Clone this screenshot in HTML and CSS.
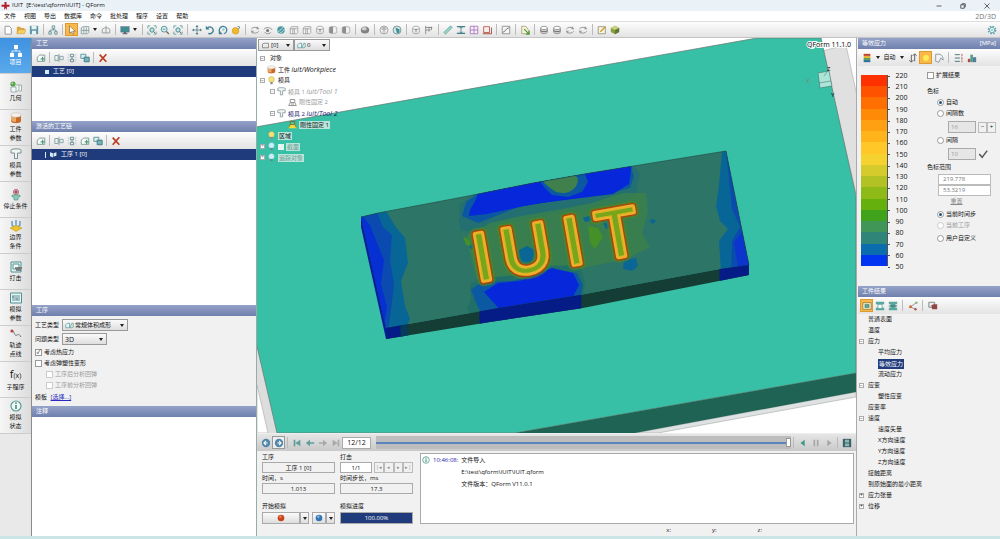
FILE: index.html
```
<!DOCTYPE html>
<html lang="zh-CN">
<head>
    <meta charset="UTF-8">
    <meta name="viewport" content="width=device-width, initial-scale=1.0">
    <title>IUIT [E:\test\qform\IUIT] - QForm</title>
    <link rel="stylesheet" href="styles.css">
</head>
<body>
    <!-- Icon sprite -->
    <svg class="sprite" aria-hidden="true">
        <symbol id="i-new" viewBox="0 0 12 12"><path d="M2.500 1.500h5l2.500 2.500v7h-7.500z" fill="#fff" stroke="#888"/></symbol>
        <symbol id="i-open" viewBox="0 0 12 12"><path d="M1 10V2h4l1 1.500h4V10z" fill="#d9a63a"/><path d="M1 10.500l2-5h9l-2 5z" fill="#f5cf62" stroke="#b98a2a" stroke-width=".5"/></symbol>
        <symbol id="i-save" viewBox="0 0 12 12"><path d="M1 1h10v10H1z" fill="#5f97a5"/><path d="M3 1h6v4H3zM3.500 7h5v4h-5z" fill="#e8f2f4"/></symbol>
        <symbol id="i-flow" viewBox="0 0 12 12"><path d="M5 1h3v3H5zM1 8h3v3H1zM8 8h3v3H8zM6.500 4v2M2.500 8V6h7v2" fill="none" stroke="#5b8f8f"/></symbol>
        <symbol id="i-cursor" viewBox="0 0 12 12"><path d="M3 1v9l2.300-2 1.500 3.300 1.500-.7-1.500-3.100H10z" fill="#fff" stroke="#7a6742" stroke-width=".8"/></symbol>
        <symbol id="i-mesh" viewBox="0 0 12 12"><path d="M1.500 3.500l2-1.500h7v7l-1.500 1.500h-7.500zM1.500 6.500h9M4.500 3v7M7.500 3v7" fill="#eef3f3" stroke="#7b8f90" stroke-width=".9"/></symbol>
        <symbol id="i-plane" viewBox="0 0 12 12"><path d="M1.500 5v4.500h9V5L8 3.500H4zM6 1v9" fill="none" stroke="#8b9799"/></symbol>
        <symbol id="i-screen" viewBox="0 0 12 12"><rect x="1" y="2" width="10" height="6.500" fill="#3f8f92" stroke="#557" stroke-width=".5"/><path d="M4.500 8.500h3V10h-3zM3 10h6v1H3z" fill="#667"/></symbol>
        <symbol id="i-zoom" viewBox="0 0 12 12"><circle cx="5" cy="5" r="3.500" fill="#dff0f0" stroke="#3f8a8c"/><path d="M7.700 7.700l3 3" stroke="#7a6a5a" stroke-width="1.600"/><path d="M3.500 5h3" stroke="#3f8a8c"/></symbol>
        <symbol id="i-zoomfit" viewBox="0 0 12 12"><path d="M1 4V1h3M8 1h3v3M1 8v3h3M11 8v3H8" fill="none" stroke="#5a9a9a"/><circle cx="6" cy="6" r="2.600" fill="#bfe2e0" stroke="#35807f"/><path d="M8 8l2 2" stroke="#555"/></symbol>
        <symbol id="i-move" viewBox="0 0 12 12"><path d="M6 1v10M1 6h10" stroke="#4d7f88"/><path d="M6 0l1.800 2.300H4.200zM6 12l1.800-2.300H4.200zM0 6l2.300-1.800v3.600zM12 6L9.700 4.200v3.600z" fill="#4d7f88"/></symbol>
        <symbol id="i-rot" viewBox="0 0 12 12"><path d="M3 3.500a4 4 0 1 1 1 6.500" fill="none" stroke="#3a7f92" stroke-width="1.600"/><path d="M1 1v4.500h4.500z" fill="#3a7f92"/></symbol>
        <symbol id="i-rot3" viewBox="0 0 12 12"><path d="M2 8a4.500 4.500 0 1 1 5 2.500" fill="none" stroke="#3a7f92" stroke-width="1.500"/><path d="M1 6v5h4.500z" fill="#3a7f92"/><circle cx="6.500" cy="5.500" r="1.500" fill="#8cc"/></symbol>
        <symbol id="i-spin" viewBox="0 0 12 12"><circle cx="5.500" cy="7" r="4" fill="#f0b92c" stroke="#c48b16" stroke-width=".6"/><path d="M8 1.500l2.500 1-1.500 2.500" fill="none" stroke="#4d7f88"/></symbol>
        <symbol id="i-orbit" viewBox="0 0 12 12"><path d="M1.500 5a5 3.500 0 0 1 9-.5M10.500 7.500a5 3.500 0 0 1-9 .5" fill="none" stroke="#999" stroke-width="1.200"/><path d="M9 1.500l2 3.500H7.500zM3 10.500L1 7h3.500z" fill="#999"/></symbol>
        <symbol id="i-eye" viewBox="0 0 12 12"><path d="M1 5a5.500 4 0 0 1 10 1M2 8.500a4 3 0 0 0 7.500 0" fill="none" stroke="#888"/><circle cx="5.500" cy="6.500" r="1.800" fill="#777"/></symbol>
        <symbol id="i-globe" viewBox="0 0 12 12"><circle cx="6" cy="6" r="4.500" fill="#4c98a0"/><path d="M2 8c3-1 5-3 7-6M4 10c3-1 5-3 6-5" stroke="#d4eeee" fill="none"/></symbol>
        <symbol id="i-box" viewBox="0 0 12 12"><path d="M1.500 3.500l2-1.500h7v7l-1.500 1.500h-7.500zM1.500 4.500h8M4.500 4.500v6M6.500 4.500v6" fill="#f2f2f2" stroke="#8b8b8b" stroke-width=".8"/></symbol>
        <symbol id="i-cyl" viewBox="0 0 12 12"><path d="M2 3.500v5c0 2.600 8 2.600 8 0v-5" fill="#ececec" stroke="#8b8b8b" stroke-width=".8"/><ellipse cx="6" cy="3.500" rx="4" ry="2" fill="#fff" stroke="#8b8b8b" stroke-width=".8"/><path d="M6 4v5" stroke="#777"/></symbol>
        <symbol id="i-ring" viewBox="0 0 12 12"><path d="M2 3.500v5c0 2.600 8 2.600 8 0v-5" fill="#d2d2d2" stroke="#777" stroke-width=".8"/><ellipse cx="6" cy="3.500" rx="4" ry="2" fill="#fff" stroke="#777" stroke-width=".8"/><path d="M2 6.500c0 2 8 2 8 0" stroke="#555" fill="none"/></symbol>
        <symbol id="i-half" viewBox="0 0 12 12"><path d="M1.500 3c2-1.500 7-1.500 9 0v6c-2 1.500-7 1.500-9 0z" fill="#f0f0f0" stroke="#999" stroke-width=".8"/><path d="M1.500 3C2.500 2 4 2 6 2v8c-2 0-3.500 0-4.500-1z" fill="#8e8e8e"/></symbol>
        <symbol id="i-ball" viewBox="0 0 12 12"><ellipse cx="6" cy="6" rx="5" ry="4.300" fill="#838383"/><ellipse cx="5" cy="4.500" rx="3" ry="2" fill="#cfcfcf"/></symbol>
        <symbol id="i-cube" viewBox="0 0 12 12"><circle cx="6" cy="6" r="4.800" fill="#ececec" stroke="#868686" stroke-width=".8"/><path d="M3 4.500l3 1.500 3-1.500M6 6v4M4 2.500l4 2M8 2.500l-4 2" stroke="#868686" fill="none" stroke-width=".8"/></symbol>
        <symbol id="i-cubet" viewBox="0 0 12 12"><circle cx="6" cy="6" r="4.800" fill="#d5e6e6" stroke="#517577" stroke-width=".8"/><path d="M4 3l5 2v4L6 10z" fill="#3e8f96"/></symbol>
        <symbol id="i-flag" viewBox="0 0 12 12"><path d="M2 1v10M2 3h8M2 6h6M6 2v6M9 2v4" stroke="#777" fill="none" stroke-width=".9"/></symbol>
        <symbol id="i-ruler" viewBox="0 0 12 12"><path d="M1 9l8-8 2 2-8 8z" fill="#9dd5ca" stroke="#4a9a90" stroke-width=".8"/></symbol>
        <symbol id="i-ibeam" viewBox="0 0 12 12"><path d="M1 2h10M1 10h10" stroke="#44808a" stroke-width="1.500"/><path d="M6 2v8M4 4l2-2 2 2M4 8l2 2 2-2" stroke="#44808a" fill="none"/></symbol>
        <symbol id="i-grid" viewBox="0 0 12 12"><path d="M1.500 1.500h9v9h-9zM6 1.500v9M1.500 6h9" fill="#f6effa" stroke="#a270b8"/></symbol>
        <symbol id="i-crop" viewBox="0 0 12 12"><path d="M2 2h7v7H2z" fill="none" stroke="#c04a3c"/><path d="M1 10.500h10.500V3" fill="none" stroke="#94372d"/></symbol>
        <symbol id="i-chart" viewBox="0 0 12 12"><path d="M1.500 1.500h9v9h-9z" fill="#f5f5f5" stroke="#888"/><path d="M2 9l3-2 1.500-2L10 3" fill="none" stroke="#666"/></symbol>
        <symbol id="i-pageg" viewBox="0 0 12 12"><path d="M2 1.500h5l3.500 5v4H2z" fill="#f4f1d8" stroke="#99905a" stroke-width=".8"/><path d="M5 5l6 6M11 7v4H7" stroke="#4f9a3c" stroke-width="1.500" fill="none"/></symbol>
        <symbol id="i-edit" viewBox="0 0 12 12"><path d="M1.500 2h8.500v8.500H1.500z" fill="#fbf6d8" stroke="#777" stroke-width=".8"/><path d="M4 8l6-6" stroke="#c99a28" stroke-width="1.600"/></symbol>
        <symbol id="i-cubeg" viewBox="0 0 12 12"><path d="M1 3.500L6 1l5 2.500v5L6 11 1 8.500z" fill="#8a9c3e"/><path d="M1 3.500L6 6l5-2.500L6 1z" fill="#cbd27e"/><path d="M6 6v5l5-2.500v-5z" fill="#5f7a34"/></symbol>
        <symbol id="i-gear" viewBox="0 0 12 12"><circle cx="6" cy="6" r="4.300" fill="none" stroke="#5aa3ad" stroke-width="1.800" stroke-dasharray="2 1.380"/><circle cx="6" cy="6" r="3.200" fill="#fff" stroke="#5aa3ad"/><circle cx="6" cy="6" r="1.200" fill="none" stroke="#5aa3ad" stroke-width=".8"/></symbol>
        <symbol id="i-add" viewBox="0 0 12 12"><path d="M1.500 10V5l3-2.500h6V10z" fill="#fafcfc" stroke="#72908d"/><path d="M8 4.500v5M5.500 7h5" stroke="#4d9f78" stroke-width="1.500"/></symbol>
        <symbol id="i-rename" viewBox="0 0 12 12"><path d="M1 3h4v6H1zM7 4h4v4H7zM6 1v10" fill="none" stroke="#7a9b9d"/></symbol>
        <symbol id="i-tree" viewBox="0 0 12 12"><path d="M1.500 1v10M10.500 1v10" stroke="#9bbcc0" stroke-dasharray="1 1"/><path d="M4 1.500h4v3H4zM4 7.500h4v3H4zM6 4.500v3" fill="none" stroke="#567f84"/></symbol>
        <symbol id="i-copy" viewBox="0 0 12 12"><path d="M1 1.500h6v5H1z" fill="#d9ecee" stroke="#4f8b96"/><path d="M5 5h6v5.500H5z" fill="#74b2bc" stroke="#34707c"/></symbol>
        <symbol id="i-del" viewBox="0 0 12 12"><path d="M2 2l8 8.500M10 1.500L2 10.500" stroke="#b93a20" stroke-width="2" fill="none"/></symbol>
        <symbol id="i-project" viewBox="0 0 12 12"><path d="M4 0h4v4H4zM0 8h4v4H0zM8 8h4v4H8z" fill="#fff"/><path d="M6 4v2M2 8V6h8v2" fill="none" stroke="#d8ecff"/></symbol>
        <symbol id="i-geom" viewBox="0 0 12 12"><path d="M1 6h5v5H1zM6 11l3-2V4H6M9 4h2.500v6H9" fill="#f5f8f8" stroke="#7d9a9a" stroke-width=".7"/><circle cx="3" cy="3" r="2.600" fill="#58a64b"/><circle cx="2.300" cy="2.300" r=".9" fill="#b5e0aa"/></symbol>
        <symbol id="i-work" viewBox="0 0 12 12"><path d="M1 3v6c0 3 10 3 10 0V3z" fill="#c86a2a"/><path d="M1 3v5c0 1 3 2 5 2V3z" fill="#e9a768"/><ellipse cx="6" cy="3" rx="5" ry="2.200" fill="#f6f1e8" stroke="#aaa" stroke-width=".4"/></symbol>
        <symbol id="i-tool" viewBox="0 0 12 12"><path d="M1 2c0-1.500 10-1.500 10 0v3H7.500v5.500h-3V5H1z" fill="#f1f4f4" stroke="#6d8587" stroke-width=".9"/></symbol>
        <symbol id="i-stop" viewBox="0 0 12 12"><circle cx="6" cy="3" r="2.500" fill="#d9a4ac" stroke="#9a4e5b" stroke-width=".8"/><circle cx="6" cy="3" r="1" fill="#8a2f40"/><path d="M2 6h8v2H8v3H4V8H2z" fill="#8cc9bb" stroke="#4d9384" stroke-width=".6"/></symbol>
        <symbol id="i-bound" viewBox="0 0 12 12"><path d="M2 1v4l2 2M6 0v6M10 1v4L8 7" stroke="#5b93b5" stroke-width="1.300" fill="none"/><path d="M0 8l6-2.500L12 8l-6 3.500z" fill="#ecc32f" stroke="#b89118" stroke-width=".5"/></symbol>
        <symbol id="i-blow" viewBox="0 0 12 12"><path d="M1 1h10v10H1z" fill="#e8f2f2" stroke="#4f9292"/><path d="M3 3h6v5H3z" fill="#fff" stroke="#4f9292"/><path d="M5 7h7M6 9h5" stroke="#666" stroke-width="1.400"/></symbol>
        <symbol id="i-sim" viewBox="0 0 12 12"><path d="M.5 1h11v10H.5z" fill="#e8f2f2" stroke="#4f9292"/><path d="M3 3v6M5 3v6M7 3v6M9 3v6" stroke="#3c7f80" stroke-width=".8"/><path d="M2.300 5h1.500M6.300 7h1.500" stroke="#3c7f80"/></symbol>
        <symbol id="i-trace" viewBox="0 0 12 12"><circle cx="2" cy="3" r="1.600" fill="#c03434"/><path d="M2 3c3 0 2 6 5 4 2-1 2-1 4 2" fill="none" stroke="#777"/></symbol>
        <symbol id="i-info" viewBox="0 0 12 12"><circle cx="6" cy="6" r="5" fill="#eef8f5" stroke="#5a9f93" stroke-width="1.200"/><path d="M6 5v4M6 2.500V4" stroke="#39756c" stroke-width="1.400"/></symbol>
        <symbol id="i-shape" viewBox="0 0 12 12"><path d="M1 9V5l2-2h3v6zM7 9l2-6h2v5l-2 1z" fill="#e8f4f4" stroke="#4b8f92" stroke-width=".9"/></symbol>
        <symbol id="i-doc" viewBox="0 0 12 12"><path d="M2 9V4l2-1h6v6z" fill="none" stroke="#777"/></symbol>
        <symbol id="i-bulb" viewBox="0 0 12 12"><circle cx="6" cy="4.500" r="3.800" fill="#f7e27a" stroke="#b9a04a" stroke-width=".6"/><path d="M4.500 8h3v3h-3z" fill="#888"/></symbol>
        <symbol id="i-bulbb" viewBox="0 0 12 12"><circle cx="6" cy="4.500" r="3.800" fill="#c8f1f6" stroke="#6fb3b8" stroke-width=".6"/><path d="M4.500 8h3v3h-3z" fill="#5d8a8a"/></symbol>
        <symbol id="i-fix" viewBox="0 0 12 12"><path d="M3 2h6v4H3zM1 10l2-4M11 10L9 6M1 10h10M4 8h4" fill="none" stroke="#8a8a8a" stroke-width="1.200"/></symbol>
        <symbol id="i-fixy" viewBox="0 0 12 12"><path d="M0 11l3-6h6l3 6z" fill="#f0dc3b"/><path d="M3 2h6v4H3zM1 10l2-4M11 10L9 6" fill="none" stroke="#776f2f" stroke-width="1.200"/></symbol>
        <symbol id="i-scale" viewBox="0 0 12 12"><path d="M2 1h8v2.500H2z" fill="#c4432e"/><path d="M2 3.500h8V6H2z" fill="#e3b437"/><path d="M2 6h8v2.500H2z" fill="#58a25a"/><path d="M2 8.500h8V11H2z" fill="#2f6f9c"/></symbol>
        <symbol id="i-updown" viewBox="0 0 12 12"><path d="M4 2v9M1.500 8.500L4 11l2.500-2.500M8 10V1M5.500 3.500L8 1l2.500 2.500" fill="none" stroke="#666" stroke-width="1.200"/></symbol>
        <symbol id="i-sun" viewBox="0 0 12 12"><circle cx="6" cy="6" r="3.500" fill="#ffec52"/></symbol>
        <symbol id="i-sheet" viewBox="0 0 12 12"><path d="M2 1.500h5c3 1 4 4 4 7L8 6l-2 5-4-1z" fill="#f4f4f4" stroke="#7d8f95"/></symbol>
        <symbol id="i-minmax" viewBox="0 0 12 12"><path d="M1 2h6M1 6h6M1 10h6" stroke="#4c7d7a" stroke-width="1.200"/><path d="M9.500 1v10" stroke="#a44" stroke-dasharray="3 1"/></symbol>
        <symbol id="i-histo" viewBox="0 0 12 12"><path d="M1 7h3v4H1z" fill="#b34a36"/><path d="M4 2h3v9H4z" fill="#4e9a86"/><path d="M7 5h4v6H7z" fill="#4f7f9a"/></symbol>
        <symbol id="i-res1" viewBox="0 0 12 12"><path d="M1 2h10v8H1z" fill="#fff3cf" stroke="#927a3d"/><path d="M3.500 4h5v4h-5z" fill="#5aa79a" stroke="#3f6d64" stroke-width=".6"/></symbol>
        <symbol id="i-res2" viewBox="0 0 12 12"><path d="M1 1h10v3H9v4h2v3H1V8h2V4H1z" fill="#5aa79f"/><path d="M4 4.500h4v4H4z" fill="#fff"/></symbol>
        <symbol id="i-res3" viewBox="0 0 12 12"><path d="M1 1h10v3H9v4h2v3H1V8h2V4H1z" fill="#5aa79f"/><path d="M1 6h10" stroke="#27665f"/></symbol>
        <symbol id="i-nodes" viewBox="0 0 12 12"><path d="M10 2L3 7l6 3" stroke="#888" fill="none"/><circle cx="10" cy="2" r="1.500" fill="#8b7"/><circle cx="3" cy="7" r="1.800" fill="#cc6a3a"/><circle cx="9" cy="10" r="1.500" fill="#b55"/></symbol>
        <symbol id="i-stack" viewBox="0 0 12 12"><path d="M1 1.500h7v6H1z" fill="#e5e8ec" stroke="#777"/><path d="M4 5l3-1h4v6H5z" fill="#8f4540"/></symbol>
        <symbol id="i-prev" viewBox="0 0 12 12"><circle cx="6" cy="6" r="5" fill="#4f86a9"/><path d="M8 6H4M6 3.500L3.500 6 6 8.500" stroke="#fff" stroke-width="1.300" fill="none"/></symbol>
        <symbol id="i-next" viewBox="0 0 12 12"><circle cx="6" cy="6" r="5" fill="#4f86a9"/><path d="M4 6h4M6 3.500L8.500 6 6 8.500" stroke="#fff" stroke-width="1.300" fill="none"/></symbol>
        <symbol id="i-first" viewBox="0 0 12 12"><path d="M2 2h2v8H2zM10 2v8L4 6z" fill="#5e9f9b"/></symbol>
        <symbol id="i-left" viewBox="0 0 12 12"><path d="M1 6l5-4v3h5v2H6v3z" fill="#5e9f9b"/></symbol>
        <symbol id="i-right" viewBox="0 0 12 12"><path d="M11 6L6 2v3H1v2h5v3z" fill="#a9a9a9"/></symbol>
        <symbol id="i-last" viewBox="0 0 12 12"><path d="M8 2h2v8H8zM2 2v8l6-4z" fill="#a9a9a9"/></symbol>
        <symbol id="i-playl" viewBox="0 0 12 12"><path d="M8 2v8L3 6z" fill="#3f9a85"/></symbol>
        <symbol id="i-pause" viewBox="0 0 12 12"><path d="M3 2h2v8H3zM7 2h2v8H7z" fill="#a6a6a6"/></symbol>
        <symbol id="i-playr" viewBox="0 0 12 12"><path d="M4 2v8l5-4z" fill="#a6a6a6"/></symbol>
        <symbol id="i-film" viewBox="0 0 12 12"><path d="M1 1h10v10H1z" fill="#3c5f66"/><path d="M3.500 2h5v3.500h-5zM3.500 6.500h5V10h-5z" fill="#8bb7b5"/></symbol>
        <symbol id="i-check" viewBox="0 0 12 12"><path d="M1.500 6l3.500 4 6-8" fill="none" stroke="#555" stroke-width="1.800"/></symbol>
        <symbol id="i-red" viewBox="0 0 12 12"><circle cx="6" cy="6" r="5" fill="#c9431f"/><circle cx="5" cy="4" r="2" fill="#e57c55"/></symbol>
        <symbol id="i-blue" viewBox="0 0 12 12"><circle cx="6" cy="6" r="5" fill="#3576b5"/><circle cx="5" cy="4" r="2" fill="#7cb1de"/></symbol>
    </svg>

    <!-- Title bar -->
    <header class="titlebar">
        <svg class="logo" viewBox="0 0 12 12"><path d="M4.500 0h3v4H12v3H8v5L6 9l-2 3V7H0V4h4.500z" fill="#b3202c"/></svg>
        <span>IUIT&nbsp; [E:\test\qform\IUIT] - QForm</span>
        <div class="window-buttons">
            <button aria-label="Minimize"><svg viewBox="0 0 12 12"><path d="M1 6h10" stroke="#333" stroke-width="1.500"/></svg></button>
            <button aria-label="Restore"><svg viewBox="0 0 12 12"><path d="M1.500 3.500h7v7h-7zM4 3V1.500h6.500V8H9" fill="none" stroke="#333" stroke-width="1.500"/></svg></button>
            <button aria-label="Close"><svg viewBox="0 0 12 12"><path d="M1 1l10 10M11 1L1 11" stroke="#333" stroke-width="1.500"/></svg></button>
        </div>
    </header>
    <nav class="menubar">
        <a href="#">文件</a><a href="#">视图</a><a href="#">导出</a><a href="#">数据库</a><a href="#">命令</a><a href="#">批处理</a><a href="#">程序</a><a href="#">设置</a><a href="#">帮助</a>
        <span class="mode">2D/3D</span>
    </nav>
    <div class="toolbar main-toolbar">
        <button><svg><use href="#i-new"/></svg></button>
        <button><svg><use href="#i-open"/></svg></button>
        <button><svg><use href="#i-save"/></svg></button>
        <i class="sep"></i>
        <button><svg><use href="#i-flow"/></svg></button>
        <i class="sep"></i>
        <button class="active"><svg><use href="#i-cursor"/></svg></button>
        <button><svg><use href="#i-mesh"/></svg></button>
        <button class="drop" aria-label="More"></button>
        <button><svg><use href="#i-plane"/></svg></button>
        <i class="sep"></i>
        <button><svg><use href="#i-screen"/></svg></button>
        <button class="drop" aria-label="More"></button>
        <i class="sep"></i>
        <button><svg><use href="#i-zoomfit"/></svg></button>
        <button><svg><use href="#i-zoom"/></svg></button>
        <button><svg><use href="#i-zoomfit"/></svg></button>
        <i class="sep"></i>
        <button><svg><use href="#i-move"/></svg></button>
        <button><svg><use href="#i-rot"/></svg></button>
        <button><svg><use href="#i-rot3"/></svg></button>
        <button><svg><use href="#i-spin"/></svg></button>
        <i class="sep"></i>
        <button><svg><use href="#i-orbit"/></svg></button>
        <button><svg><use href="#i-eye"/></svg></button>
        <button><svg><use href="#i-globe"/></svg></button>
        <button><svg><use href="#i-box"/></svg></button>
        <button><svg><use href="#i-box"/></svg></button>
        <button><svg><use href="#i-cyl"/></svg></button>
        <button><svg><use href="#i-half"/></svg></button>
        <button><svg><use href="#i-half"/></svg></button>
        <i class="sep"></i>
        <button><svg><use href="#i-ball"/></svg></button>
        <i class="sep"></i>
        <button><svg><use href="#i-cube"/></svg></button>
        <button><svg><use href="#i-cubet"/></svg></button>
        <i class="sep"></i>
        <button><svg><use href="#i-cyl"/></svg></button>
        <button><svg><use href="#i-flag"/></svg></button>
        <i class="sep"></i>
        <button><svg><use href="#i-ruler"/></svg></button>
        <button><svg><use href="#i-ibeam"/></svg></button>
        <button><svg><use href="#i-grid"/></svg></button>
        <button><svg><use href="#i-crop"/></svg></button>
        <i class="sep"></i>
        <button><svg><use href="#i-chart"/></svg></button>
        <i class="sep"></i>
        <button><svg><use href="#i-pageg"/></svg></button>
        <i class="sep"></i>
        <button><svg><use href="#i-ring"/></svg></button>
        <button><svg><use href="#i-ring"/></svg></button>
        <button><svg><use href="#i-orbit"/></svg></button>
        <button><svg><use href="#i-orbit"/></svg></button>
        <i class="sep"></i>
        <button><svg><use href="#i-edit"/></svg></button>
        <button><svg><use href="#i-cubeg"/></svg></button>
        <button class="push"><svg><use href="#i-gear"/></svg></button>
    </div>

    <main class="workspace">
        <!-- Sections -->
        <nav class="sections">
            <button class="current"><svg><use href="#i-project"/></svg><span>项目</span></button>
            <button><svg><use href="#i-geom"/></svg><span>几何</span></button>
            <button><svg><use href="#i-work"/></svg><span>工件<br>参数</span></button>
            <button><svg><use href="#i-tool"/></svg><span>模具<br>参数</span></button>
            <button><svg><use href="#i-stop"/></svg><span>停止条件</span></button>
            <button><svg><use href="#i-bound"/></svg><span>边界<br>条件</span></button>
            <button><svg><use href="#i-blow"/></svg><span>打击</span></button>
            <button><svg><use href="#i-sim"/></svg><span>模拟<br>参数</span></button>
            <button><svg><use href="#i-trace"/></svg><span>轨迹<br>点线</span></button>
            <button><b>f<small>(x)</small></b><span>子程序</span></button>
            <button><svg><use href="#i-info"/></svg><span>模拟<br>状态</span></button>
        </nav>

        <!-- Process panel -->
        <aside class="left-panel">
            <h2>工艺</h2>
            <div class="toolbar">
                <button><svg><use href="#i-add"/></svg></button>
                <i class="sep"></i>
                <button><svg><use href="#i-rename"/></svg></button>
                <button><svg><use href="#i-tree"/></svg></button>
                <button><svg><use href="#i-copy"/></svg></button>
                <i class="sep"></i>
                <button><svg><use href="#i-del"/></svg></button>
            </div>
            <div class="list short">
                <div class="list-row"><i class="square"></i>工艺 [0]</div>
            </div>
            <h2>激活的工艺链</h2>
            <div class="toolbar">
                <button><svg><use href="#i-add"/></svg></button>
                <i class="sep"></i>
                <button><svg><use href="#i-rename"/></svg></button>
                <button><svg><use href="#i-tree"/></svg></button>
                <button><svg><use href="#i-add"/></svg></button>
                <button><svg><use href="#i-copy"/></svg></button>
                <i class="sep"></i>
                <button><svg><use href="#i-del"/></svg></button>
            </div>
            <div class="list tall">
                <div class="list-row"><i class="stick"></i><svg viewBox="0 0 12 12"><path d="M0 2l5 2v7L0 9zM6 4l5-2v6l-5 2z" fill="#d5ecf5"/></svg>工序 1 [0]</div>
            </div>
            <h2>工序</h2>
            <form class="operation">
                <div class="field">
                    <label for="proc-type">工艺类型</label>
                    <span class="combo wide"><svg><use href="#i-shape"/></svg><select id="proc-type"><option>常规体积成形</option></select></span>
                </div>
                <div class="field">
                    <label for="prob-type">问题类型</label>
                    <span class="combo mid"><select id="prob-type"><option>3D</option></select></span>
                </div>
                <label class="tick"><input type="checkbox" checked>考虑热应力</label>
                <label class="tick"><input type="checkbox">考虑弹塑性变形</label>
                <label class="tick sub"><input type="checkbox" disabled>工序后分析回弹</label>
                <label class="tick sub"><input type="checkbox" disabled>工序前分析回弹</label>
                <div class="template">模板 <a href="#">[选择...]</a></div>
            </form>
            <h2>注释</h2>
            <div class="list fill"></div>
        </aside>

        <!-- Viewport and simulation control -->
        <section class="center">
            <div class="viewport">
                <svg class="scene" viewBox="257 38 599 395" preserveAspectRatio="xMidYMid slice">
                    <defs>
                        <clipPath id="top-face"><path d="M361 217L378 213 463 197 533 183 590 173 726 151 749 265 720 269 633 285 580 295 493 309 386 328z"/></clipPath>
                        <clipPath id="front-face"><path d="M386 328L493 309 580 295 633 285 720 269 749 265V275L583 308 490 322 386 339z"/></clipPath>
                    </defs>
                    <path d="M257 38h599v395H257z" fill="#fff"/>
                    <path d="M822 51L846 45 860 110V210z" fill="#e0e0e0" stroke="#aaa" stroke-width=".6"/>
                    <path d="M257 345L277 433H257z" fill="#ddd"/>
                    <path d="M257 385L268 433H257z" fill="#fff" stroke="#aaa" stroke-width=".6"/>
                    <path d="M635 433L856 392V397L658 433z" fill="#dfe2e2" stroke="#999" stroke-width=".5"/>
                    <path d="M250 128L757 38H821L856 196V373L515 433H277L250 316z" fill="#38c0a6" stroke="#66736b" stroke-width=".7"/>
                    <path d="M515 433L856 373V392L635 433z" fill="#1f6354"/>
                    <!-- workpiece, top face -->
                    <g clip-path="url(#top-face)">
                        <path d="M350 140h410v200H350z" fill="#2d7566"/>
                        <path d="M386 211l9 15 10 12 3 25-7 18 4 25 5 13-7 15-40 10-20-130z" fill="#076696"/>
                        <path d="M377 212l6 15 9 8-2 25 4 24-2 18-4 30H360l-10-120z" fill="#0b4bb0"/>
                        <path d="M361 215l9 10 7 18 7 17-3 24 6 23-4 25-30-100z" fill="#0730d2"/>
                        <path d="M459 222l1-18 22-15 45-15 100-18 13 18-4 20-15 10-38 6-42 6-42 8-22 8-16-2z" fill="#236f72"/>
                        <path d="M462 216l4-14 20-14 44-14 97-16 7 18-4 12-24 6-41 5-46 8-41 16z" fill="#0b57a2"/>
                        <path d="M470 210l8-14 30-16 42-2 24 16 20-6 8-14 30-10-3 20-16 10-40 5-40 5-46 10-18 2z" fill="#0628da"/>
                        <path d="M478 190l60-20 92-14-2 28-16 8-64 10-74 12z" fill="#0628da"/>
                        <path d="M538 178l44-12 6 16-6 10-14 5-16-2-8-8z" fill="#0b57a2"/>
                        <path d="M544 183c4-9 26-12 33-6 3 5-2 15-12 16-10 1-14-5-21-10z" fill="#3f804c"/>
                        <path d="M466 236l24-13 26-6 46-8 30-6 30-10 24 0 2 18-6 22 8 14-24 12-38 8-32 6-42 8-27 8-12-16z" fill="#3c8148" opacity=".75"/>
                        <path d="M470 284l12-6 26-2 40-10 32-1 5 18-3 20-56 14-52 6-7-14 4-10z" fill="#207069"/>
                        <path d="M471 290l10-8 32-1 38-12 26 4 6 12-3 14-55 14-40 8-8-16z" fill="#0b58a3"/>
                        <path d="M484 292l14-9 22-2 32-13 21 5 6 12-6 12-70 16z" fill="#0628da"/>
                        <path d="M519 250l8-4 8 4-3 12-8 5-6-7zM600 217l12-4 3 14-9 2zM583 218l8-3 2 5-8 2zM624 260l12-2 2 8-6 5-9-2zM649 221l4-2 3 2-3 3zM468 245l6-2 1 4-4 2z" fill="#0a6694"/>
                        <path d="M588 226l10 2 5 9-8 12-5-6zM463 236l6 4 2 6-5-1z" fill="#46902a"/>
                        <path d="M722 151l-3 35-3 20 4 15 8 8-9 12 2 30h40V140z" fill="#076696"/>
                        <path d="M726 151l4 38 2 20 8 18-8 14-1 40h30V140z" fill="#0b4bb0"/>
                        <path d="M739 215l5 15-10 12 5 30h20z" fill="#0b35cc"/>
                    </g>
                    <!-- workpiece, sides -->
                    <g clip-path="url(#front-face)">
                        <path d="M380 260h380v90H380z" fill="#143d35"/>
                        <path d="M380 310l22 10 3 25h-25zM479 300l102-20 1 60H480zM719 260h40v30h-39z" fill="#051c86"/>
                        <path d="M400 315l8 4 1 30h-8z" fill="#083a5c"/>
                    </g>
                    <path d="M361 217V227L386 339V328z" fill="#061f9c"/>
                    <path d="M361 217L378 213 463 197 533 183 590 173 726 151 749 265" fill="none" stroke="#24443f" stroke-width=".6"/>
                    <!-- embossed letters -->
                    <g class="emboss" transform="rotate(-10 486 280)">
                        <text class="glow" x="477 506 569 603" y="280">IUIT</text>
                        <text class="edge" x="477 506 569 603" y="280">IUIT</text>
                        <text class="rim" x="477 506 569 603" y="280">IUIT</text>
                        <text class="core" x="477 506 569 603" y="280">IUIT</text>
                    </g>
                    <!-- orientation cube -->
                    <path d="M818 73l11-2 3 15-12 2z" fill="#a9e6d8" stroke="#4c6f68" stroke-width=".6"/>
                    <path d="M819 83l12-2M824 76l3-4" stroke="#577" stroke-width=".6"/>
                    <text class="axis" x="827" y="71">Z</text>
                    <text class="axis dull" x="806" y="83">X</text>
                    <text class="axis" x="831" y="97">Y</text>
                    <text class="version" x="807" y="47">QForm 11.1.0</text>
                </svg>
                <div class="overlay">
                    <div class="filters">
                        <span class="combo"><svg><use href="#i-doc"/></svg><select aria-label="Process"><option>[0]</option></select></span>
                        <span class="combo"><svg><use href="#i-shape"/></svg><select aria-label="Operation"><option>0</option></select></span>
                    </div>
                    <ul class="tree objects">
                        <li class="root"><i class="box">−</i><span>对象</span></li>
                        <li><i class="box none"></i><svg><use href="#i-work"/></svg><span>工件 <em>iuit/Workpiece</em></span></li>
                        <li><i class="box">−</i><svg><use href="#i-bulb"/></svg><span>模具</span></li>
                        <li class="l1 dim"><i class="box">−</i><svg><use href="#i-tool"/></svg><span>模具 1 <em>iuit/Tool 1</em></span></li>
                        <li class="l2 dim"><svg><use href="#i-fix"/></svg><span>刚性固定 2</span></li>
                        <li class="l1 navy"><i class="box">−</i><svg><use href="#i-tool"/></svg><span>模具 2 <em>iuit/Tool 2</em></span></li>
                        <li class="l2 halo"><svg><use href="#i-fixy"/></svg><span>刚性固定 1</span></li>
                        <li class="halo"><i class="box none"></i><svg><use href="#i-bulb"/></svg><span>区域</span></li>
                        <li class="halo dim"><i class="box">+</i><svg><use href="#i-bulbb"/></svg><i class="swatch"></i><span>截面</span></li>
                        <li class="halo dim"><i class="box">+</i><svg><use href="#i-bulbb"/></svg><span>追踪对象</span></li>
                    </ul>
                </div>
            </div>

            <div class="playback">
                <button><svg><use href="#i-prev"/></svg></button>
                <button class="framed"><svg><use href="#i-next"/></svg></button>
                <i class="sep"></i>
                <button><svg><use href="#i-first"/></svg></button>
                <button><svg><use href="#i-left"/></svg></button>
                <button><svg><use href="#i-right"/></svg></button>
                <button><svg><use href="#i-last"/></svg></button>
                <input type="text" value="12/12" aria-label="Record">
                <input type="range" min="1" max="12" value="12" aria-label="Timeline">
                <i class="sep"></i>
                <button><svg><use href="#i-playl"/></svg></button>
                <button><svg><use href="#i-pause"/></svg></button>
                <button><svg><use href="#i-playr"/></svg></button>
                <i class="sep"></i>
                <button><svg><use href="#i-film"/></svg></button>
            </div>

            <div class="control">
                <div class="sim">
                    <div class="cell"><label for="op">工序</label><input id="op" type="text" value="工序 1 [0]" readonly></div>
                    <div class="cell">
                        <label for="blow">打击</label>
                        <div class="blow">
                            <input id="blow" type="text" value="1/1">
                            <div class="steps"><button>|◂</button><button>◂</button><button>▸</button><button>▸|</button></div>
                        </div>
                    </div>
                    <div class="cell"><label for="time">时间，s</label><input id="time" type="text" value="1.013" readonly></div>
                    <div class="cell"><label for="step">时间步长，ms</label><input id="step" type="text" value="17.3" readonly></div>
                    <div class="cell last">
                        <span>开始模拟</span>
                        <div class="run">
                            <button class="start"><svg><use href="#i-red"/></svg></button><button class="drop" aria-label="More"></button>
                            <button class="server"><svg><use href="#i-blue"/></svg></button><button class="drop" aria-label="More"></button>
                        </div>
                    </div>
                    <div class="cell last">
                        <span>模拟进度</span>
                        <div class="progress"><div class="bar" style="width: 100%">100.00%</div></div>
                    </div>
                </div>
                <div class="log">
                    <svg><use href="#i-info"/></svg>
                    <time>10:46:08:</time>
                    <div class="message">
                        <p>文件导入</p>
                        <p>E:\test\qform\IUIT\IUIT.qform</p>
                        <p>文件版本：QForm V11.0.1</p>
                    </div>
                </div>
            </div>
            <footer class="status"><span>x:</span><span>y:</span><span>z:</span></footer>
        </section>

        <!-- Results panel -->
        <aside class="right-panel">
            <h2>等效应力<span>[MPa]</span></h2>
            <div class="toolbar">
                <button><svg><use href="#i-scale"/></svg></button>
                <button class="drop" aria-label="More"></button>
                <button class="text">自动</button>
                <button class="drop" aria-label="More"></button>
                <button><svg><use href="#i-updown"/></svg></button>
                <button class="active"><svg><use href="#i-sun"/></svg></button>
                <button><svg><use href="#i-sheet"/></svg></button>
                <i class="sep"></i>
                <button><svg><use href="#i-minmax"/></svg></button>
                <button><svg><use href="#i-histo"/></svg></button>
            </div>
            <div class="legend">
                <div class="scale">
                    <i class="c1"></i><i class="c2"></i><i class="c3"></i><i class="c4"></i><i class="c5"></i><i class="c6"></i><i class="c7"></i><i class="c8"></i><i class="c9"></i><i class="c10"></i><i class="c11"></i><i class="c12"></i><i class="c13"></i><i class="c14"></i><i class="c15"></i><i class="c16"></i><i class="c17"></i>
                </div>
                <ol class="ticks">
                    <li>220</li><li>210</li><li>200</li><li>190</li><li>180</li><li>170</li><li>160</li><li>150</li><li>140</li><li>130</li><li>120</li><li>110</li><li>100</li><li>90</li><li>80</li><li>70</li><li>60</li><li>50</li>
                </ol>
                <form class="options">
                    <label class="opt"><input type="checkbox">扩展结果</label>
                    <p class="caption">色标</p>
                    <label class="opt in"><input type="radio" name="scale" checked>自动</label>
                    <label class="opt in"><input type="radio" name="scale">间隔数</label>
                    <div class="value"><input type="text" value="16" aria-label="间隔数" disabled><button type="button">−</button><button type="button">+</button></div>
                    <label class="opt in"><input type="radio" name="scale">间隔</label>
                    <div class="value"><input type="text" value="10" aria-label="间隔" disabled><svg><use href="#i-check"/></svg></div>
                    <p>色标范围</p>
                    <div class="range">
                        <input type="text" value="219.778" aria-label="最大值">
                        <input type="text" value="53.3219" aria-label="最小值">
                        <a href="#">重置</a>
                    </div>
                    <label class="opt in"><input type="radio" name="range" checked>当前时间步</label>
                    <label class="opt in dim"><input type="radio" name="range" disabled>当前工序</label>
                    <label class="opt in user"><input type="radio" name="range">用户自定义</label>
                </form>
            </div>
            <h2>工件结果</h2>
            <div class="toolbar">
                <button class="active"><svg><use href="#i-res1"/></svg></button>
                <button><svg><use href="#i-res2"/></svg></button>
                <button><svg><use href="#i-res3"/></svg></button>
                <i class="sep"></i>
                <button><svg><use href="#i-nodes"/></svg></button>
                <i class="sep"></i>
                <button><svg><use href="#i-stack"/></svg></button>
            </div>
            <ul class="tree results">
                <li><i class="box none"></i><span>普通表面</span></li>
                <li><i class="box none"></i><span>温度</span></li>
                <li><i class="box">−</i><span>应力</span></li>
                <li class="l1"><span>平均应力</span></li>
                <li class="l1"><span class="selected">等效应力</span></li>
                <li class="l1"><span>流动应力</span></li>
                <li><i class="box">−</i><span>应变</span></li>
                <li class="l1"><span>塑性应变</span></li>
                <li><i class="box none"></i><span>应变率</span></li>
                <li><i class="box">−</i><span>速度</span></li>
                <li class="l1"><span>速度矢量</span></li>
                <li class="l1"><span>X方向速度</span></li>
                <li class="l1"><span>Y方向速度</span></li>
                <li class="l1"><span>Z方向速度</span></li>
                <li><i class="box none"></i><span>接触距离</span></li>
                <li><i class="box none"></i><span>到原始面的最小距离</span></li>
                <li><i class="box">+</i><span>应力张量</span></li>
                <li><i class="box">+</i><span>位移</span></li>
            </ul>
        </aside>
    </main>
</body>
</html>
```
FILE: styles.css
```
/* General Styles */
* {
    box-sizing: border-box;
}
body {
    display: flex;
    flex-direction: column;
    min-height: 100vh;
    margin: 0;
    border-bottom: 3px solid #cbe4e6;
    background: #f1f1f1;
    color: #111;
    font-family: "Open Sans", "Noto Sans CJK SC", sans-serif;
    font-size: 6px;
    line-height: 11px;
}
button, input, select {
    margin: 0;
    padding: 0;
    border: 0;
    border-radius: 0;
    background: none;
    color: inherit;
    font: inherit;
}
ul, ol, p, h2 {
    margin: 0;
    padding: 0;
    list-style: none;
}
svg {
    flex: none;
    width: 10px;
    height: 10px;
}
.sprite {
    position: absolute;
    width: 0;
    height: 0;
}

/* Title and menu */
.titlebar {
    display: flex;
    align-items: center;
    gap: 2px;
    height: 11px;
    padding-left: 1px;
    background: #eaf2f8;
}
.titlebar .logo {
    width: 9px;
    height: 8px;
}
.window-buttons {
    display: flex;
    gap: 18px;
    margin-left: auto;
    padding-right: 10px;
}
.window-buttons button {
    display: flex;
}
.window-buttons svg {
    width: 6px;
    height: 6px;
}
.menubar {
    display: flex;
    align-items: center;
    gap: 8px;
    height: 10px;
    padding: 0 4px;
    background: #fff;
}
.menubar a {
    color: #111;
    text-decoration: none;
}
.menubar .mode {
    margin-left: auto;
    color: #777;
    font-size: 7px;
}

/* Toolbars */
.toolbar {
    display: flex;
    align-items: center;
    height: 17px;
    padding: 0 2px;
    background: linear-gradient(#fdfdfd, #e3e3e3);
}
.toolbar button {
    display: flex;
    flex: none;
    align-items: center;
    justify-content: center;
    width: 13px;
    height: 13px;
}
.toolbar .active {
    border: 1px solid #d99b32;
    background: #fbb84a;
}
.toolbar .text {
    width: 15px;
}
.toolbar .drop {
    width: 9px;
}
.drop::before, .combo::after {
    content: "";
    border: 2px solid transparent;
    border-top: 3px solid #222;
    border-bottom: 0;
}
.toolbar .push {
    margin-left: auto;
}
.sep {
    flex: none;
    width: 1px;
    height: 11px;
    margin: 0 2px;
    background: #bbb;
}
.main-toolbar {
    padding: 0 2px 0 1px;
    border-top: 1px solid #ddd;
    border-bottom: 1px solid #c4c4c4;
}
.main-toolbar .sep {
    margin: 0 2px 0 3px;
}
.main-toolbar .drop {
    width: 8px;
}

/* Workspace */
.workspace {
    display: flex;
    flex: 1;
}
h2 {
    display: flex;
    justify-content: space-between;
    height: 11px;
    padding: 0 4px;
    background: linear-gradient(#95a2c8, #6f80ad);
    color: #fff;
    font-size: 6px;
    font-weight: 400;
}
.sections {
    display: flex;
    flex: none;
    flex-direction: column;
    width: 32px;
    border-right: 1px solid #8b8b8b;
    background: #e9e9e9;
}
.sections button {
    display: flex;
    flex-direction: column;
    align-items: center;
    justify-content: center;
    gap: 1px;
    height: 36px;
    border-bottom: 1px solid #ccc;
    background: linear-gradient(90deg, #f6f6f6, #dcdcdc);
    line-height: 9px;
}
.sections .current {
    background: linear-gradient(#3f92e0, #5aa9ec);
    color: #fff;
}
.sections svg {
    width: 12px;
    height: 12px;
}
.sections b {
    font-size: 11px;
    font-weight: 400;
    line-height: 12px;
}
.sections small {
    font-size: 7px;
}

/* Left panel */
.left-panel {
    display: flex;
    flex: none;
    flex-direction: column;
    width: 225px;
    border-right: 1px solid #9aa;
}
.list {
    background: #fff;
}
.short {
    height: 55px;
}
.tall {
    height: 156px;
}
.fill {
    flex: 1;
}
.list-row {
    display: flex;
    align-items: center;
    gap: 4px;
    height: 11px;
    padding-left: 13px;
    background: #1f3b7c;
    color: #fff;
}
.list-row svg {
    width: 7px;
    height: 7px;
}
.square {
    width: 4px;
    height: 4px;
    background: #d5ecf5;
}
.stick {
    width: 1px;
    height: 6px;
    background: #d5ecf5;
}
.operation {
    height: 90px;
    padding: 3px;
}
.field {
    display: flex;
    align-items: center;
    gap: 3px;
    height: 12px;
    margin-bottom: 2px;
}
.combo {
    display: flex;
    align-items: center;
    gap: 1px;
    height: 12px;
    padding: 0 3px 0 2px;
    border: 1px solid #999;
    background: linear-gradient(#fafafa, #dedede);
}
.combo svg {
    width: 9px;
    height: 9px;
}
.combo select {
    flex: 1;
    min-width: 0;
    appearance: none;
}
.wide {
    width: 66px;
}
.mid {
    width: 45px;
}
.mid select {
    font-size: 7px;
}
.tick {
    display: flex;
    align-items: center;
    gap: 2px;
    height: 11px;
}
.sub {
    padding-left: 11px;
    color: #999;
}
input[type="checkbox"], input[type="radio"] {
    display: grid;
    flex: none;
    place-items: center;
    width: 7px;
    height: 7px;
    border: 1px solid #999;
    background: #fff;
    appearance: none;
}
input[type="radio"] {
    border-radius: 50%;
}
input[type="radio"]:checked::before {
    content: "";
    width: 3px;
    height: 3px;
    border-radius: 50%;
    background: #1d5578;
}
input[type="checkbox"]:checked::before {
    content: "✓";
    font-size: 6px;
    line-height: 5px;
}
input:disabled {
    border-color: #ccc;
}
.template {
    padding-top: 1px;
}
.template a {
    margin-left: 2px;
    color: #2a2ac0;
}

/* Viewport */
.center {
    display: flex;
    flex: 1;
    flex-direction: column;
    min-width: 0;
}
.viewport {
    position: relative;
    flex: 1;
    min-height: 390px;
    overflow: hidden;
}
.scene {
    position: absolute;
    inset: 0;
    width: 100%;
    height: 100%;
}
.emboss {
    font-family: "Liberation Sans", sans-serif;
    font-size: 68px;
    stroke-linejoin: round;
}
.glow {
    fill: none;
    stroke: #4c8a22;
    stroke-opacity: .6;
    stroke-width: 12px;
}
.edge {
    fill: none;
    stroke: #a8480e;
    stroke-width: 8px;
}
.rim {
    fill: none;
    stroke: #efae2c;
    stroke-width: 5px;
}
.core {
    fill: #79a51a;
    stroke: #d8b428;
    stroke-width: 1px;
}
.axis {
    font-size: 6px;
}
.dull {
    fill: #8a7a70;
}
.version {
    font-size: 7px;
    paint-order: stroke;
    stroke: #fff;
    stroke-width: 2px;
}
.overlay {
    position: absolute;
    top: 1px;
    left: 1px;
}
.filters {
    display: flex;
}
.filters .combo {
    width: 36px;
}

/* Trees */
.tree li {
    display: flex;
    align-items: center;
    gap: 2px;
    height: 11px;
}
.tree svg {
    width: 9px;
    height: 9px;
}
.tree em {
    font-size: 7px;
}
.box {
    display: grid;
    place-items: center;
    flex: none;
    width: 5px;
    height: 5px;
    border: 1px solid #aaa;
    background: #fff;
    font-size: 5px;
    font-style: normal;
    line-height: 3px;
}
.none {
    visibility: hidden;
}
.objects {
    padding: 2px 0 0 2px;
}
.objects .root {
    gap: 5px;
}
.objects .l1 {
    padding-left: 10px;
}
.objects .l2 {
    padding-left: 28px;
}
.dim {
    color: #999;
}
.navy {
    color: #1c1c70;
}
.halo span {
    padding: 0 1px;
    background: #b9e6dc;
    line-height: 8px;
}
.halo.dim span {
    color: #6f9a92;
}
.swatch {
    width: 6px;
    height: 6px;
    background: #e3f6f2;
}

/* Playback */
.playback {
    display: flex;
    align-items: center;
    height: 18px;
    padding: 0 3px 0 2px;
    border-top: 1px solid #eee;
    background: linear-gradient(#e6e6e6, #c9c9c9);
}
.playback button {
    display: flex;
    align-items: center;
    justify-content: center;
    width: 13px;
    height: 13px;
}
.playback .framed {
    border: 1px solid #999;
    background: #eee;
}
.playback input[type="text"] {
    width: 29px;
    height: 12px;
    border: 1px solid #aaa;
    background: #fff;
    font-size: 7px;
    text-align: center;
}
.playback input[type="range"] {
    flex: 1;
    min-width: 0;
    height: 13px;
    margin-left: 5px;
    background: #bdbdbd;
    appearance: none;
}
input[type="range"]::-webkit-slider-runnable-track {
    height: 2px;
    background: #5a84bd;
}
input[type="range"]::-webkit-slider-thumb {
    width: 5px;
    height: 9px;
    margin-top: -4px;
    border: 1px solid #999;
    background: #fff;
    appearance: none;
}

/* Simulation control */
.control {
    display: flex;
    gap: 7px;
    height: 74px;
    padding: 2px 2px 1px 5px;
}
.sim {
    display: grid;
    grid-template-columns: 73px 73px;
    grid-template-rows: 21px 21px 29px;
    column-gap: 5px;
}
.cell {
    display: flex;
    flex-direction: column;
    line-height: 9px;
}
.cell input {
    width: 100%;
    height: 11px;
    border: 1px solid #aaa;
    text-align: center;
}
.last {
    justify-content: flex-end;
    gap: 1px;
}
.blow {
    display: flex;
    gap: 2px;
}
.blow input {
    width: 32px;
    background: #fff;
}
.steps {
    display: flex;
    flex: 1;
}
.steps button {
    flex: 1;
    height: 11px;
    border: 1px solid #bbb;
    color: #888;
    font-size: 5px;
    line-height: 9px;
}
.run {
    display: flex;
    height: 12px;
}
.run button {
    display: flex;
    align-items: center;
    justify-content: center;
    border: 1px solid #aaa;
    background: linear-gradient(#fafafa, #dedede);
}
.run svg {
    width: 8px;
    height: 8px;
}
.run .start {
    width: 38px;
}
.run .server {
    width: 14px;
    margin-left: 3px;
}
.run .drop {
    width: 9px;
}
.progress {
    height: 12px;
    border: 1px solid #aaa;
    line-height: 10px;
}
.bar {
    height: 100%;
    background: #1f3b7c;
    color: #fff;
    text-align: center;
}
.log {
    display: flex;
    flex: 1;
    gap: 3px;
    padding: 0 4px 0 1px;
    border: 1px solid #aaa;
    background: #fff;
    line-height: 12px;
}
.log svg {
    width: 8px;
    height: 8px;
    margin-top: 2px;
}
.log time {
    color: #2222b0;
}
.status {
    display: flex;
    justify-content: flex-end;
    gap: 41px;
    height: 11px;
    padding-right: 94px;
}

/* Right panel */
.right-panel {
    flex: none;
    width: 144px;
    padding-left: 1px;
    border-left: 1px solid #aaa;
}
.right-panel .toolbar .sep {
    margin: 0 3px;
}
.legend {
    display: flex;
    height: 220px;
    padding: 4px 4px 0 3px;
}
.scale {
    display: flex;
    flex-direction: column;
    width: 27px;
    height: 191px;
    margin-top: 5px;
    border-right: 1px solid #555;
}
.scale i {
    flex: 1;
}
.c1 { background: #ff3000; }
.c2 { background: #ff5200; }
.c3 { background: #ff6e00; }
.c4 { background: #ff8a08; }
.c5 { background: #ff9f12; }
.c6 { background: #ffb41c; }
.c7 { background: #ffc828; }
.c8 { background: #f6d230; }
.c9 { background: #d6cb2c; }
.c10 { background: #b2c224; }
.c11 { background: #8eba18; }
.c12 { background: #66b00e; }
.c13 { background: #3fa41c; }
.c14 { background: #3f9656; }
.c15 { background: #2f8578; }
.c16 { background: #0b6cae; }
.c17 { background: #0034f0; }
.ticks {
    display: flex;
    flex-direction: column;
    justify-content: space-between;
    width: 40px;
    height: 202px;
    font-size: 7px;
}
.ticks li::before {
    content: "";
    display: inline-block;
    width: 2px;
    height: 1px;
    margin-right: 6px;
    background: #555;
    vertical-align: middle;
}
.options {
    flex: 1;
}
.options p {
    height: 12px;
}
.options .caption {
    height: 11px;
    margin-top: 5px;
}
.opt {
    display: flex;
    align-items: center;
    gap: 2px;
    height: 11px;
}
.in {
    padding-left: 10px;
}
.user {
    margin-top: 2px;
}
.value {
    display: flex;
    align-items: center;
    height: 16px;
    padding-left: 21px;
}
.value input {
    width: 28px;
    height: 12px;
    margin-right: 2px;
    padding-left: 2px;
    border: 1px solid #aaa;
    background: #e6e6e6;
    color: #999;
}
.value button {
    width: 9px;
    height: 11px;
    border: 1px solid #bbb;
    line-height: 9px;
}
.range {
    display: flex;
    flex-direction: column;
    width: 64px;
    height: 35px;
    padding-left: 11px;
}
.range input {
    width: 100%;
    height: 11px;
    padding-left: 4px;
    border: 1px solid #bbb;
    background: #fff;
    color: #777;
}
.range a {
    align-self: center;
    padding-right: 16px;
    color: #888;
}
.results {
    padding-left: 1px;
}
.results .box + span {
    padding-left: 2px;
}
.results .l1 {
    padding-left: 19px;
}
.selected {
    padding: 0 1px;
    background: #1f3b7c;
    color: #fff;
    line-height: 10px;
}
```
